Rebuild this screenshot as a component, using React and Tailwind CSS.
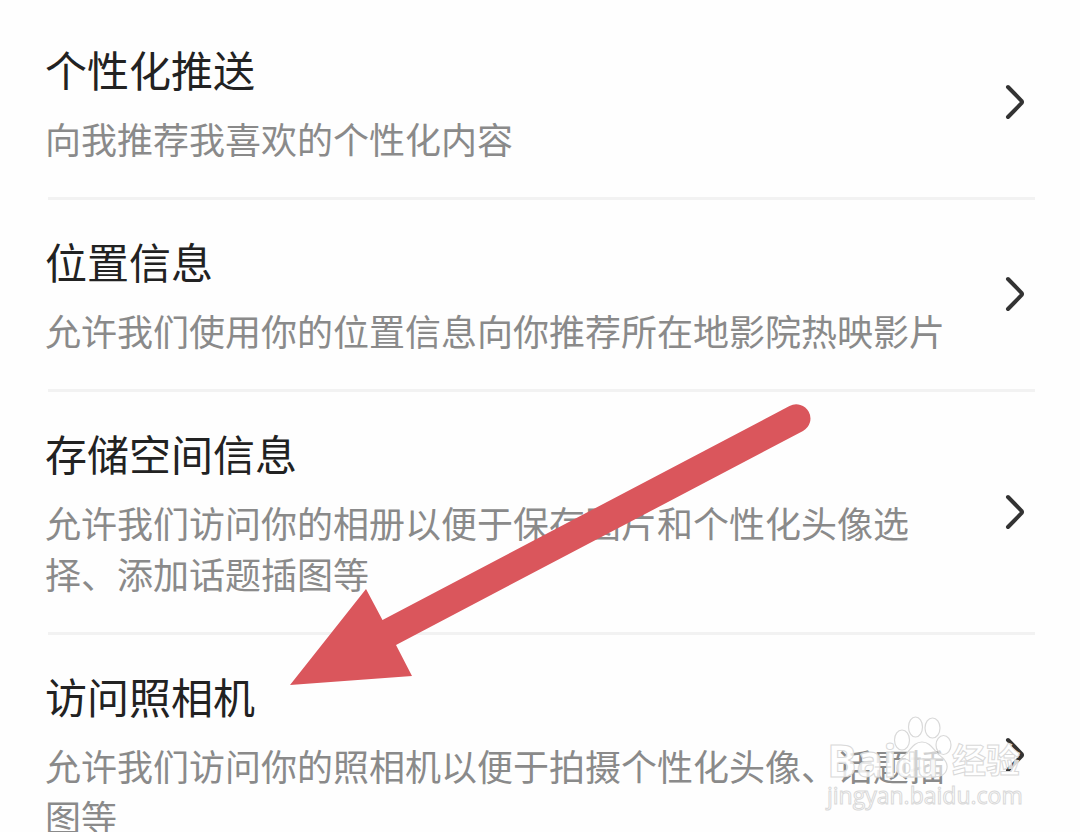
import React from "react";

const settings = [
  {
    title: "个性化推送",
    desc: "向我推荐我喜欢的个性化内容",
  },
  {
    title: "位置信息",
    desc: "允许我们使用你的位置信息向你推荐所在地影院热映影片",
  },
  {
    title: "存储空间信息",
    desc: "允许我们访问你的相册以便于保存图片和个性化头像选择、添加话题插图等",
  },
  {
    title: "访问照相机",
    desc: "允许我们访问你的照相机以便于拍摄个性化头像、话题插图等",
  },
];

const Chevron = () => (
  <svg
    className="w-5 h-9 shrink-0 mr-[10px]"
    viewBox="0 0 20 36"
    fill="none"
    stroke="#333333"
    strokeWidth="4"
    strokeLinecap="round"
    strokeLinejoin="round"
    aria-hidden="true"
  >
    <path d="M3 3 L16.500 16.800 Q17.500 18 16.500 19.200 L3 33" />
  </svg>
);

const SettingRow = ({ title, desc }) => (
  <li>
    <button
      type="button"
      className="flex w-full items-center justify-between gap-12 pt-8 pb-[33px] text-left"
    >
      <span className="flex flex-1 flex-col gap-[15px]">
        <span className="text-[42px] leading-[58px] text-[#222222]">
          {title}
        </span>
        <span className="text-[36px] leading-[51px] text-[#8a8a8a]">
          {desc}
        </span>
      </span>
      <Chevron />
    </button>
    <hr className="ml-[3px] border-t-3 border-[#f2f2f2]" />
  </li>
);

// red pointer lying over the list
const PointerArrow = () => (
  <svg
    className="pointer-events-none absolute top-[400px] left-[286px] w-[528px] h-[290px]"
    viewBox="286 400 528 290"
    fill="#da565c"
    aria-hidden="true"
  >
    <path d="M290 685 L366 589 L382.500 620 L789.500 406 A14.200 14.200 0 0 1 803 431 L396 645 L412 676 Z" />
  </svg>
);

const Watermark = () => (
  <div className="pointer-events-none absolute top-[714px] right-[60px] w-[193px] text-white/80 font-['Open_Sans','Noto_Sans_CJK_SC',sans-serif]">
    <svg
      className="absolute top-0 left-[64px] w-[62px] h-[68px]"
      viewBox="891 714 62 68"
      fill="rgba(255,255,255,0.6)"
      stroke="#d9d9d9"
      strokeWidth="1.200"
      aria-hidden="true"
    >
      <ellipse cx="902" cy="740" rx="7.500" ry="10" />
      <ellipse cx="915.500" cy="727" rx="7" ry="10" />
      <ellipse cx="932.500" cy="728" rx="7.500" ry="10" />
      <ellipse cx="943.500" cy="745" rx="7.500" ry="9.500" />
      <path d="M922 742 C914 742 911 749 906 754 C900 759 896 763 897 770 C899 777 906 777 912 777 L932 777 C939 777 946 776 947 768 C948 762 943 758 938 754 C933 749 930 742 922 742 Z" />
    </svg>
    <div className="relative flex items-start justify-between pt-4 font-bold leading-[60px] [-webkit-text-stroke:1px_#d9d9d9]">
      <span className="text-[44px]">
        Bai<span className="text-[32px]">du</span>
      </span>
      <span className="text-[34px] leading-[60px]">经验</span>
    </div>
    <p className="-mt-4 text-[23px] leading-8 [-webkit-text-stroke:1px_#d9d9d9]">
      jingyan.baidu.com
    </p>
  </div>
);

const App = () => {
  return (
    <main className="relative h-screen overflow-hidden bg-[#fefefe] pt-2 pl-[45px] pr-[45px] font-['Noto_Sans_CJK_SC',sans-serif]">
      <ul>
        {settings.map((item) => (
          <SettingRow key={item.title} title={item.title} desc={item.desc} />
        ))}
      </ul>
      <PointerArrow />
      <Watermark />
    </main>
  );
};

export default App;
